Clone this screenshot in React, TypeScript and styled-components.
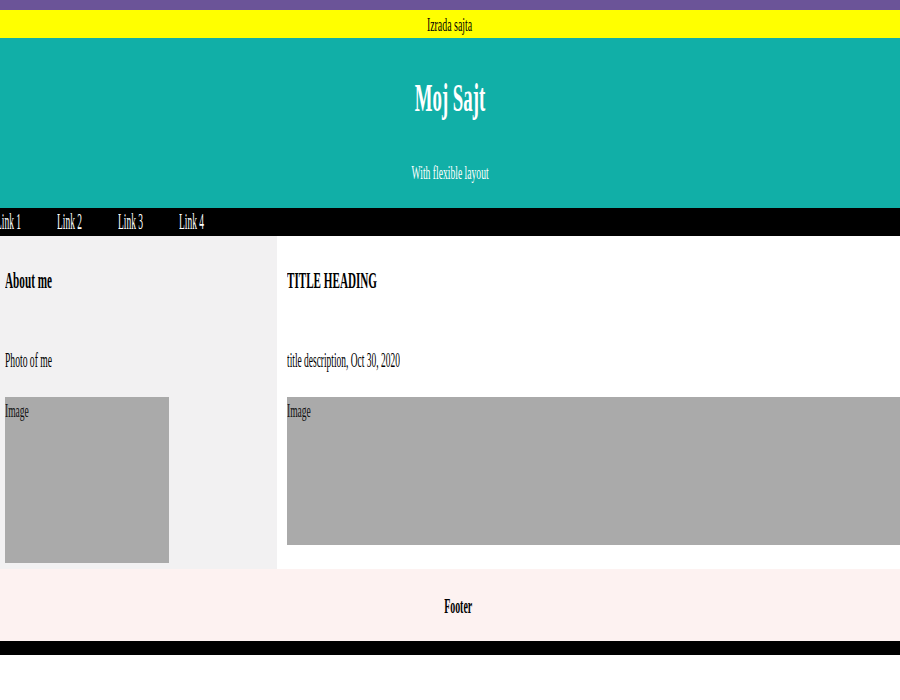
import React from "react";
import styled, { createGlobalStyle } from "styled-components";

const GlobalStyle = createGlobalStyle`
  html, body {
    margin: 0;
    padding: 0;
    background: #ffffff;
  }
  body {
    font-family: "Liberation Serif", "Times New Roman", serif;
    color: #000000;
    overflow: hidden;
  }
`;

const Page = styled.div`
  display: flex;
  flex-direction: column;
  width: 900px;
  overflow: hidden;
`;

/* Narrow, condensed text: the reference draws Times squeezed horizontally */
const Squeezed = styled.span<{ $sx: number; $origin?: string }>`
  display: inline-block;
  white-space: nowrap;
  transform: scaleX(${(p) => p.$sx});
  transform-origin: ${(p) => p.$origin ?? "left center"};
`;

const TopStripe = styled.div`
  height: 10px;
  background: #6b5498;
`;

const Banner = styled.div`
  height: 28px;
  background: #ffff00;
  text-align: center;
  font-size: 19px;
  line-height: 29px;
`;

const Hero = styled.header`
  height: 170px;
  box-sizing: border-box;
  padding-top: 39px;
  background: #11afa7;
  color: #ffffff;
  text-align: center;
`;

const HeroTitle = styled.h1`
  margin: 0;
  font-size: 40px;
  line-height: 42px;
  font-weight: 700;
`;

const HeroSubtitle = styled.p`
  margin: 44px 0 0;
  font-size: 18.5px;
  line-height: 20px;
`;

const Nav = styled.nav`
  display: flex;
  height: 28px;
  background: #000000;
  padding-left: 0;
`;

const NavLink = styled.a`
  display: block;
  width: 61px;
  flex: none;
  color: #ffffff;
  text-decoration: none;
  font-size: 22.6px;
  line-height: 28px;
  &:first-child {
    margin-left: -4px;
  }
`;

const Content = styled.main`
  display: grid;
  grid-template-columns: 277px 1fr;
`;

const Sidebar = styled.aside`
  display: flex;
  flex-direction: column;
  background: #f2f1f2;
  padding: 30px 5px 6px;
`;

const Article = styled.section`
  display: flex;
  flex-direction: column;
  background: #ffffff;
  padding: 30px 0 0 10px;
`;

const Heading = styled.h2`
  margin: 0;
  font-size: 23px;
  line-height: 29px;
  font-weight: 700;
`;

const Caption = styled.p`
  margin: 52px 0 0;
  font-size: 21px;
  line-height: 27px;
`;

const ImageBox = styled.div<{ $w?: string; $h: number }>`
  margin-top: 23px;
  width: ${(p) => p.$w ?? "100%"};
  height: ${(p) => p.$h}px;
  box-sizing: border-box;
  padding-top: 4px;
  background: #aaaaaa;
  font-size: 18px;
  line-height: 21px;
  color: #111111;
`;

const Footer = styled.footer`
  height: 72px;
  display: flex;
  align-items: center;
  justify-content: center;
  padding-left: 16px;
  padding-top: 2px;
  box-sizing: border-box;
  background: #fdf2f1;
  font-size: 22px;
  font-weight: 700;
`;

const BottomBar = styled.div`
  height: 14px;
  background: #000000;
`;

export default function App() {
  return (
    <>
      <GlobalStyle />
      <Page>
        <TopStripe />
        <Banner>
          <Squeezed $sx={0.52} $origin="center">Izrada sajta</Squeezed>
        </Banner>
        <Hero>
          <HeroTitle>
            <Squeezed $sx={0.47} $origin="center">Moj Sajt</Squeezed>
          </HeroTitle>
          <HeroSubtitle>
            <Squeezed $sx={0.52} $origin="center">With flexible layout</Squeezed>
          </HeroSubtitle>
        </Hero>
        <Nav>
          {["Link 1", "Link 2", "Link 3", "Link 4"].map((l) => (
            <NavLink key={l} href="#">
              <Squeezed $sx={0.42}>{l}</Squeezed>
            </NavLink>
          ))}
        </Nav>
        <Content>
          <Sidebar>
            <Heading>
              <Squeezed $sx={0.487}>About me</Squeezed>
            </Heading>
            <Caption>
              <Squeezed $sx={0.458}>Photo of me</Squeezed>
            </Caption>
            <ImageBox $w="164px" $h={166}>
              <Squeezed $sx={0.53}>Image</Squeezed>
            </ImageBox>
          </Sidebar>
          <Article>
            <Heading>
              <Squeezed $sx={0.484}>TITLE HEADING</Squeezed>
            </Heading>
            <Caption>
              <Squeezed $sx={0.45}>title description, Oct 30, 2020</Squeezed>
            </Caption>
            <ImageBox $h={148}>
              <Squeezed $sx={0.53}>Image</Squeezed>
            </ImageBox>
          </Article>
        </Content>
        <Footer>
          <Squeezed $sx={0.45} $origin="center">Footer</Squeezed>
        </Footer>
        <BottomBar />
      </Page>
    </>
  );
}
